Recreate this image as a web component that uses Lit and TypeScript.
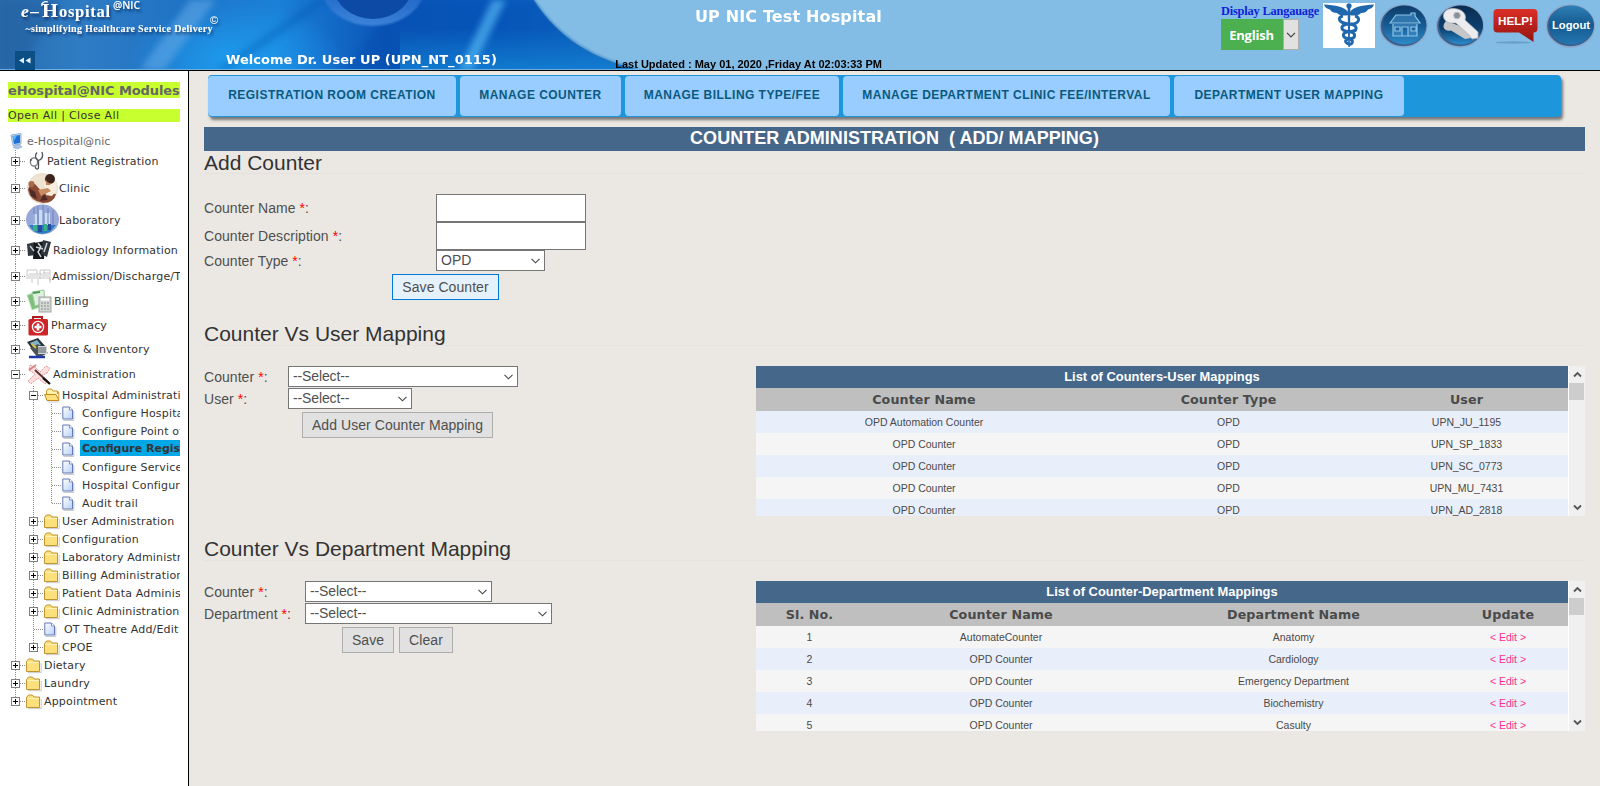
import { LitElement, html, css, svg, nothing } from "lit";
import { customElement, property } from "lit/decorators.js";
import { classMap } from "lit/directives/class-map.js";

const SANS = css`"Liberation Sans", Arial, sans-serif`;
const WIDE = css`"DejaVu Sans", Verdana, sans-serif`;

/* ---------- header ---------- */

@customElement("hospital-header")
class HospitalHeader extends LitElement {
  static styles = css`
    :host {
      display: grid;
      grid-template-columns: 226px 389px 267px 339px 1fr;
      height: 70px;
      border-bottom: 1px solid #000;
      position: relative;
      background: #83bde6;
      overflow: hidden;
    }
    .art { position: absolute; inset: 0; width: 660px; height: 70px; }
    .brand, .welcome, .title, .actions { position: relative; }
    .brand svg { display: block; }
    .welcome {
      display: flex; align-items: flex-end; padding-bottom: 3px;
      font: bold 13px/15px ${WIDE}; color: #fff; white-space: nowrap; letter-spacing: 0.03px;
    }
    .title {
      display: flex; flex-direction: column; justify-content: space-between;
      align-items: flex-end; padding-top: 7px; white-space: nowrap;
    }
    .name { font: bold 16px/20px ${WIDE}; letter-spacing: 0.15px; color: #fff; }
    .updated { font: bold 11px/12px ${SANS}; color: #000; }
    .actions { grid-column: 5; display: flex; padding-top: 3px; }
    .lang { width: 102px; }
    .lang-label { font: bold 12.4px/16px "Liberation Serif", serif; letter-spacing: -0.2px; color: #1022d8; white-space: nowrap; }
    .picker { display: flex; width: 78px; height: 31px; }
    .green {
      width: 61px; padding-right: 1px; background: #4caf50; color: #fff; text-align: center;
      font: bold 13px/32px "Open Sans", "Noto Sans", sans-serif; letter-spacing: -0.2px;
    }
    .drop { box-sizing: border-box; width: 16px; background: #e1e1e1; border: 1px solid #adadad; display: grid; place-items: center; }
  `;

  render() {
    return html`
      <svg class="art" viewBox="0 0 660 70" preserveAspectRatio="none">
        <defs>
          <linearGradient id="sky" x1="0" y1="0" x2="1" y2="0">
            <stop offset="0" stop-color="#2a6cae" /><stop offset=".12" stop-color="#2f7cc4" />
            <stop offset=".26" stop-color="#2173c4" /><stop offset=".42" stop-color="#1a80d8" />
            <stop offset=".58" stop-color="#0c56b8" /><stop offset=".75" stop-color="#0a5cc0" />
            <stop offset="1" stop-color="#1673c8" />
          </linearGradient>
          <radialGradient id="glow"><stop offset="0" stop-color="#1d9df0" /><stop offset="1" stop-color="#1d9df0" stop-opacity="0" /></radialGradient>
          <linearGradient id="blob" x1="0" y1="0" x2="0" y2="1">
            <stop offset="0" stop-color="#1151b0" /><stop offset=".5" stop-color="#1e62c4" /><stop offset="1" stop-color="#4e92e4" />
          </linearGradient>
          <linearGradient id="base" x1="0" y1="0" x2="0" y2="1">
            <stop offset=".4" stop-color="#1483d4" stop-opacity="0" /><stop offset="1" stop-color="#1483d4" stop-opacity=".8" />
          </linearGradient>
          <filter id="soft"><feGaussianBlur stdDeviation="3" /></filter>
          <filter id="soft1"><feGaussianBlur stdDeviation=".8" /></filter>
        </defs>
        <rect width="660" height="70" fill="url(#sky)" />
        <ellipse cx="235" cy="62" rx="110" ry="60" fill="url(#glow)" />
        <path d="M395 0H560L620 70H345Z" fill="#0649ac" opacity=".35" filter="url(#soft)" />
        <rect x="400" width="260" height="70" fill="url(#base)" />
        <g filter="url(#soft)">
          <path d="M190 0H216L164 70H140Z" fill="#6cb0ea" opacity=".5" />
          <path d="M492 0H506L472 70H459Z" fill="#52b4f2" opacity=".7" />
          <path d="M315 0H330L230 70H215Z" fill="#0f52ae" opacity=".35" />
          <path d="M60 0L20 70H0V0Z" fill="#1f5c9c" opacity=".5" />
        </g>
        <ellipse cx="373" cy="-14" rx="52" ry="40" fill="url(#blob)" opacity=".75" filter="url(#soft1)" />
        <ellipse cx="373" cy="-16" rx="40" ry="35" fill="#0c4aa6" />
        <path d="M534 0C552 28 582 57 640 70H660V0Z" fill="#83bde6" />
        <path d="M534 0C552 28 582 57 640 70" fill="none" stroke="#2a75b8" stroke-width="1.6" opacity=".8" filter="url(#soft1)" />
        <rect y="69" width="660" height="1" fill="#6bb0e2" />
      </svg>

      <div class="brand">
        <svg width="226" height="70" viewBox="0 0 226 70">
          <defs><filter id="sh" x="-10%" y="-30%" width="120%" height="180%"><feDropShadow dx="1.5" dy="2.5" stdDeviation="1.2" flood-color="#0a2c5c" flood-opacity=".75" /></filter></defs>
          <g fill="#fff" filter="url(#sh)">
            <text x="21" y="17" font-family="Liberation Serif" font-style="italic" font-weight="bold" font-size="17.5" textLength="18">e–</text>
            <text x="42" y="16.500" font-family="Liberation Serif" font-weight="bold" font-size="19" textLength="16" lengthAdjust="spacingAndGlyphs">H</text>
            <text x="59" y="16.500" font-family="Liberation Serif" font-weight="bold" font-size="16.500" textLength="51">ospital</text>
            <text x="113" y="9" font-family="Open Sans" font-weight="600" font-size="10.5" textLength="27" lengthAdjust="spacingAndGlyphs">@NIC</text>
            <text x="25.500" y="32" font-family="Liberation Serif" font-weight="bold" font-size="10" textLength="187">~simplifying Healthcare Service Delivery</text>
            <text x="210" y="24" font-family="Liberation Sans" font-size="11">©</text>
            <path d="M42 6C41 2.500 45 1 48 2" fill="none" stroke="#fff" stroke-width="1.300" />
          </g>
          <rect x="15" y="51" width="20" height="19" fill="#0c4f84" />
          <path d="M24 57.500V63.500L19 60.500ZM30.500 57.500V63.500L25.500 60.500Z" fill="#dff0f8" />
        </svg>
      </div>
      <div class="welcome">Welcome Dr. User UP (UPN_NT_0115)</div>
      <div class="title">
        <div class="name">UP NIC Test Hospital</div>
        <div class="updated">Last Updated : May 01, 2020 ,Friday At 02:03:33 PM</div>
      </div>
      <div class="actions">
        <div class="lang">
          <div class="lang-label">Display Langauage</div>
          <div class="picker">
            <div class="green">English</div>
            <div class="drop"><svg width="10" height="6" viewBox="0 0 10 6"><path d="M1 .8L5 4.800L9 .8" fill="none" stroke="#444" stroke-width="1.200" /></svg></div>
          </div>
        </div>
        <svg width="277" height="50" viewBox="0 0 277 50">
          <defs>
            <linearGradient id="btn" x1="0" y1="0" x2="0" y2="1"><stop offset="0" stop-color="#0f3c68" /><stop offset=".5" stop-color="#155a94" /><stop offset="1" stop-color="#2f8cc8" /></linearGradient>
            <linearGradient id="key" x1="0" y1="0" x2="0" y2="1"><stop offset="0" stop-color="#0b2c50" /><stop offset=".6" stop-color="#0d4070" /><stop offset="1" stop-color="#2a8ccc" /></linearGradient>
            <linearGradient id="log" x1="0" y1="0" x2="0" y2="1"><stop offset="0" stop-color="#2e7fb6" /><stop offset=".5" stop-color="#155a90" /><stop offset="1" stop-color="#2576b0" /></linearGradient>
            <linearGradient id="red" x1="0" y1="0" x2="0" y2="1"><stop offset="0" stop-color="#dc2f28" /><stop offset="1" stop-color="#941410" /></linearGradient>
          </defs>
          <rect width="52" height="45" fill="#fff" />
          <g fill="#2068ae">
            <circle cx="26" cy="2.800" r="2.600" />
            <path d="M24.600 5H27.400L26.700 44H25.300Z" />
            <path d="M25 9C22 4 12 2 1 1.500C2 5 5 6 7 6.500C8 9 11 10 14 10C16 13 23 13 25 12Z" />
            <path d="M27 9C30 4 40 2 51 1.500C50 5 47 6 45 6.500C44 9 41 10 38 10C36 13 29 13 27 12Z" />
          </g>
          <path d="M20 13C14 14 15 20 26 21S38 14 32 13M26 21C16 22 17 28 26 28.500S36 22 26 21M26 28.500C18 30 19 35 26 35.500S34 30 26 28.500M26 35.500C21 37 22 40 26 41S31 37 26 35.500" fill="none" stroke="#2068ae" stroke-width="3" />
          <g stroke="#8aa8cc" stroke-width="1.400">
            <ellipse cx="80.500" cy="23" rx="23.500" ry="21" fill="#3b608c" /><ellipse cx="137" cy="23" rx="23.500" ry="21" fill="#3b608c" /><ellipse cx="247.500" cy="23" rx="24" ry="21" fill="#3b608c" />
          </g>
          <ellipse cx="81.500" cy="22" rx="22" ry="19.500" fill="url(#btn)" />
          <ellipse cx="138" cy="22" rx="22" ry="19.500" fill="url(#key)" />
          <ellipse cx="248.500" cy="22" rx="22.500" ry="19.500" fill="url(#log)" />
          <path d="M67 20L73 12H88V10H92V13L97 20ZM70 21V33H94V21M79 33V24H85V33M72 24H77V28H72ZM88 24H93V28H88Z" fill="#3d84bc" fill-opacity=".7" stroke="#8cc4e8" stroke-width="1.200" />
          <path d="M123 18C118 23 121 29 128 27.500L142 36L148 35L149 31L140 24Z" fill="#c4c6ca" />
          <path d="M131 5.500C122 5 118 12 122 17C125 21 130 20 133 20L147 33L149 36L155 35V29L142 17C144 11 139 6 131 5.500Z" fill="#ececee" stroke="#aeb2b8" stroke-width=".8" />
          <circle cx="134" cy="12.500" r="3.300" fill="#8a9098" stroke="#b8bcc2" />
          <ellipse cx="190" cy="39.500" rx="18" ry="1.200" fill="#5c8cb0" opacity=".6" />
          <path d="M174.500 6H210.500Q214.500 6 214.500 10V25.500Q214.500 29.500 210.500 29.500V39L196 29.500H174.500Q170.500 29.500 170.500 25.500V10Q170.500 6 174.500 6Z" fill="url(#red)" />
          <text x="175" y="22" font-family="Liberation Sans" font-weight="bold" font-size="11.500" fill="#fff" textLength="35" lengthAdjust="spacingAndGlyphs">HELP!</text>
          <text x="229" y="25.500" font-family="Liberation Sans" font-weight="bold" font-size="11.5" fill="#fff" textLength="38" lengthAdjust="spacingAndGlyphs">Logout</text>
        </svg>
      </div>
    `;
  }
}

/* ---------- sidebar tree ---------- */

type Mark = "+" | "-" | "leaf";
interface Row {
  label: string;
  depth: number;
  mark: Mark;
  icon: string;
  h?: number;
  iw?: number;
  selected?: boolean;
  end?: boolean;
}

const ROWS: Row[] = [
  { label: "Patient Registration", depth: 0, mark: "+", icon: "steth", h: 22, iw: 21 },
  { label: "Clinic", depth: 0, mark: "+", icon: "clinic", h: 32, iw: 33 },
  { label: "Laboratory", depth: 0, mark: "+", icon: "lab", h: 31, iw: 33 },
  { label: "Radiology Information", depth: 0, mark: "+", icon: "radio", h: 29, iw: 27 },
  { label: "Admission/Discharge/Transfer", depth: 0, mark: "+", icon: "bed", h: 24, iw: 26 },
  { label: "Billing", depth: 0, mark: "+", icon: "bill", h: 26, iw: 28 },
  { label: "Pharmacy", depth: 0, mark: "+", icon: "pharm", h: 22, iw: 25 },
  { label: "Store & Inventory", depth: 0, mark: "+", icon: "store", h: 26, iw: 23.5 },
  { label: "Administration", depth: 0, mark: "-", icon: "tools", h: 24, iw: 27 },
  { label: "Hospital Administration", depth: 1, mark: "-", icon: "open" },
  { label: "Configure Hospital", depth: 2, mark: "leaf", icon: "page" },
  { label: "Configure Point of Service", depth: 2, mark: "leaf", icon: "page" },
  { label: "Configure Registration", depth: 2, mark: "leaf", icon: "page", selected: true },
  { label: "Configure Services", depth: 2, mark: "leaf", icon: "page" },
  { label: "Hospital Configuration", depth: 2, mark: "leaf", icon: "page" },
  { label: "Audit trail", depth: 2, mark: "leaf", icon: "page", end: true },
  { label: "User Administration", depth: 1, mark: "+", icon: "folder" },
  { label: "Configuration", depth: 1, mark: "+", icon: "folder" },
  { label: "Laboratory Administration", depth: 1, mark: "+", icon: "folder" },
  { label: "Billing Administration", depth: 1, mark: "+", icon: "folder" },
  { label: "Patient Data Administration", depth: 1, mark: "+", icon: "folder" },
  { label: "Clinic Administration", depth: 1, mark: "+", icon: "folder" },
  { label: "OT Theatre Add/Edit", depth: 1, mark: "leaf", icon: "page" },
  { label: "CPOE", depth: 1, mark: "+", icon: "folder", end: true },
  { label: "Dietary", depth: 0, mark: "+", icon: "folder" },
  { label: "Laundry", depth: 0, mark: "+", icon: "folder" },
  { label: "Appointment", depth: 0, mark: "+", icon: "folder", end: true },
];

const ICONS: Record<string, [number, number, unknown]> = {
  steth: [21, 20, svg`<ellipse cx="8" cy="11" rx="3.600" ry="4.200" fill="none" stroke="#70787c" stroke-width="1.300"/><path d="M9 15.500C10 19 12.500 19 12.500 16V9.500M12.500 9.500C8.500 7 9 3.500 11 1.500M12.500 9.500C17 8 17 4 16 1" fill="none" stroke="#4c5458" stroke-width="1.300"/><circle cx="4.800" cy="9" r="1" fill="#4c5458"/>`],
  clinic: [32, 33, svg`<circle cx="16.500" cy="16.500" r="15" fill="#f0e2d0"/><circle cx="16.500" cy="16.500" r="15" fill="none" stroke="#e4dccb"/><path d="M2 18Q3 11 9 12L17 21L30 22Q28 31 17 31Q4 29 2 18Z" fill="#8c4a34"/><path d="M18 12L30 9L31 18L26 24L20 23Z" fill="#f8eedc"/><circle cx="24" cy="7" r="5" fill="#3c241c"/><path d="M20 8Q22 12 25 11L24 13L20 13Z" fill="#c08058"/><path d="M12 18L22 16L25 19L15 24Z" fill="#c88c60"/><path d="M3 16L9 20L11 27L5 24ZM18 22L22 28L14 29Z" fill="#4c2a28"/><circle cx="5.500" cy="12" r="3" fill="#a86c4c"/>`],
  lab: [33, 31, svg`<ellipse cx="16.500" cy="15.500" rx="16.500" ry="15" fill="#98a8d8"/><path d="M7 10H11V26H7ZM13 6H17V27H13ZM19 9H24V26H19Z" fill="#c8dcf4"/><path d="M8 3V20M12 2V20M17 1V22M22 4V20M27 6V22" stroke="#6c84bc" fill="none"/><path d="M3 21H30L24 28Q12 33 5 24Z" fill="#2c7cc0"/><path d="M7 21H11V27H7ZM18 20H21V27H18Z" fill="#38b08c"/><path d="M12 21H16V28H12ZM22 20H25V26H22Z" fill="#284c9c"/>`],
  radio: [26, 26, svg`<path d="M1 7L9 5L10 18L2 19Z" fill="#30363c"/><path d="M8 6L19 4L18 22L7 22Z" fill="#15181c"/><path d="M17 3L25 5L21 20L15 17Z" fill="#30363c"/><path d="M12 6L15 10L12 15L15 20M4 9L8 14M21 6L18 15M10 10L17 12" stroke="#c8d0d8" stroke-width="1.500" fill="none"/>`],
  bed: [25, 22, svg`<path d="M1 5H11V12M1 5V14M3 9H16M2 13H24V18M14 5V14M14 5H24V16M17 8H24M6 14V18M12 14V20M18 5V12" fill="none" stroke="#bcbcbc" stroke-width=".8"/><path d="M2 9H14V12H2ZM15 9H23V12H15Z" fill="#e4e4e4"/>`],
  bill: [27, 25, svg`<path d="M1 6L14 2L17 17L6 21Z" fill="#7cc07c" stroke="#c8e4c8"/><path d="M6 3L18 1L19 14L9 17Z" fill="#e0f0e0" stroke="#98c898"/><path d="M7 4L14 3" stroke="#48a050" stroke-width="2"/><rect x="13" y="8" width="12" height="15" fill="#d4d8d4" stroke="#a0a4a0"/><path d="M15 10.500H23" stroke="#fff" stroke-width="2"/><path d="M15 14H23M15 17H23M15 20H23" stroke="#8c908c" stroke-dasharray="2 1"/>`],
  pharm: [23, 21, svg`<path d="M7 5V2H16V5" fill="none" stroke="#b01c20" stroke-width="2"/><rect x="2.500" y="4" width="19.500" height="16.500" rx="1.500" fill="#cc2428"/><circle cx="12" cy="12" r="5.600" fill="none" stroke="#fff" stroke-width="1.300"/><path d="M12 8.500V15.500M8.500 12H15.500" stroke="#fff" stroke-width="2.600"/>`],
  store: [23, 24, svg`<path d="M1 5L12 1L20 10L8 15Z" fill="#2c3438"/><path d="M4 6L11 3L15 8L8 11Z" fill="#7cb4d0"/><path d="M4 11L12 7L22 16L12 21Z" fill="#4c5458"/><path d="M12 9H21V17H12Z" fill="#d4d8d8"/><path d="M13 10V16M15 10V16M17 10V16M19 10V16" stroke="#545c60"/><path d="M6 7L10 11" stroke="#d8c048" stroke-width="2"/><path d="M3 20H19" stroke="#2038a8" stroke-width="2.500"/>`],
  tools: [26, 24, svg`<path d="M4 3L9 5L14 10L20 4L24 6L21 11L16 13L22 19L19 22L12 16L5 22L2 19L9 12L3 8Z" fill="#fce0e0" stroke="#e49898" stroke-dasharray="2 1"/><path d="M9 8L23 21" stroke="#583038" stroke-width="1.800"/><path d="M3 8L10 3" stroke="#d87c7c" stroke-width="1.600"/><path d="M17 16L24 22" stroke="#101010" stroke-width="2.200"/>`],
  folder: [18, 18, svg`<path d="M.5 15.500V5.500L2.500 3H6.500L8 5H13.500V15.500Z" fill="#fbe07c" stroke="#c09430"/><path d="M1 6.500H13" stroke="#fff4c0"/><path d="M2 16.700H15.200V7" fill="none" stroke="#c8c8c8"/>`],
  open: [18, 18, svg`<path d="M2.500 14V5L4 3H7.500L9 5H13.500V8" fill="#fdf0a8" stroke="#c89428"/><path d="M.5 8.500H12L15 14.500H3Z" fill="#fbe07c" stroke="#c08c20"/><path d="M13.500 6H14.800V14" fill="none" stroke="#c89428"/><path d="M4 16H15.500" stroke="#ccc"/>`],
  page: [18, 18, svg`<defs><linearGradient id="pg" x1="0" y1="0" x2="1" y2="1"><stop offset="0" stop-color="#fff"/><stop offset="1" stop-color="#b4d0f8"/></linearGradient></defs><path d="M.8 3H7.500L10.500 6V15H.8Z" fill="url(#pg)" stroke="#6478b4"/><path d="M7.500 3V6H10.500" fill="#fff" stroke="#6478b4" stroke-width=".8"/><path d="M1.500 16.300H11.800V7" fill="none" stroke="#c0c0c0"/>`],
};

@customElement("module-tree")
class ModuleTree extends LitElement {
  static styles = css`
    :host {
      display: block; box-sizing: border-box; width: 188px; padding: 11px 8px 0;
      background: #fff; font: 11px/13px ${WIDE}; color: #333; letter-spacing: 0.17px;
    }
    .heading, .links { background: #c8ff2e; white-space: nowrap; overflow: hidden; }
    .heading { font: bold 13px/17px ${WIDE}; height: 16px; color: #666; letter-spacing: -0.1px; }
    .links { margin: 11px 0 10px; letter-spacing: 0.35px; line-height: 14px; height: 13px; }
    .root { display: flex; align-items: center; height: 18px; color: #666; letter-spacing: 0.05px; }
    .root svg { margin-right: 1px; }
    .row { display: flex; height: 18px; overflow: hidden; white-space: nowrap; }
    .cell { flex: none; width: 18px; position: relative; }
    .line::before, .stop::before {
      content: ""; position: absolute; left: 7px; top: 0; width: 1px; height: 100%;
      background: repeating-linear-gradient(#8c8c8c 0 1px, #fff 1px 2px);
    }
    .stop::before { height: 50%; }
    .branch::after {
      content: ""; position: absolute; left: 8px; right: 0; top: 50%; height: 1px;
      background: repeating-linear-gradient(90deg, #8c8c8c 0 1px, #fff 1px 2px);
    }
    .box {
      position: absolute; z-index: 1; left: 3px; top: calc(50% - 4px); width: 9px; height: 9px;
      display: block; background: #fff;
    }
    .icon { flex: none; display: flex; align-items: center; }
    .icon svg { flex: none; }
    .label { align-self: center; padding-top: 1px; }
    .leaf { padding-left: 2px; }
    .selected {
      background: #00a8e8; font-weight: bold; align-self: stretch; line-height: 18px;
      margin-bottom: 2px; flex: 1; padding-top: 0; letter-spacing: 0;
    }
  `;

  private row(r: Row) {
    const cells = [];
    if (r.depth > 0) cells.push(html`<span class="cell line"></span>`);
    if (r.depth > 1) cells.push(html`<span class="cell line"></span>`);
    const [w, h, art] = ICONS[r.icon];
    return html`<div class="row" style="height:${r.h ?? 18}px">
      ${cells}
      <span class=${classMap({ cell: true, branch: true, line: !r.end, stop: !!r.end })}>
        ${r.mark === "leaf" ? nothing : html`<svg class="box" viewBox="0 0 9 9">
          <rect x=".5" y=".5" width="8" height="8" fill="#fff" stroke="#808080" />
          <path d=${r.mark === "+" ? "M2 4.500H7M4.500 2V7" : "M2 4.500H7"} stroke="#000" />
        </svg>`}
      </span>
      <span class="icon" style="width:${r.iw ?? 18}px"><svg width=${w} height=${h} viewBox="0 0 ${w} ${h}">${art}</svg></span>
      <span class=${classMap({ label: true, leaf: r.mark === "leaf", selected: !!r.selected })}>${r.label}</span>
    </div>`;
  }

  render() {
    return html`
      <div class="heading">eHospital@NIC Modules</div>
      <div class="links">Open All | Close All</div>
      <div class="root">
        <svg width="18" height="18" viewBox="0 0 18 18">
          <path d="M3 3L13 1.500V12L5 13.500Z" fill="#c8dcf0" stroke="#98b0cc" />
          <path d="M4.500 4L12 3V11L6 12Z" fill="#1c70d8" /><path d="M4.500 4L9 3.500L6 9Z" fill="#58b4f8" />
          <path d="M7 13L11 12.500L14 15L9 17L5 15.500Z" fill="#a8c4e4" stroke="#88a4c8" stroke-width=".6" />
        </svg>
        <span>e-Hospital@nic</span>
      </div>
      ${ROWS.map((r) => this.row(r))}
    `;
  }
}

/* ---------- scrollable list ---------- */

@customElement("mapping-list")
class MappingList extends LitElement {
  @property() caption = "";
  @property({ attribute: false }) columns: string[] = [];
  @property({ attribute: false }) widths: number[] = [];
  @property({ attribute: false }) rows: string[][] = [];
  @property({ type: Boolean, reflect: true }) flip = false;

  static styles = css`
    :host { display: flex; width: 829px; height: 150px; overflow: hidden; color: #4a4a4a; }
    .grid { width: 812px; text-align: center; white-space: nowrap; }
    .caption { background: #45678a; color: #fff; font: bold 12.9px/21px ${SANS}; height: 22px; }
    .head, .row { display: grid; }
    .head { background: #bfbfbf; font: bold 12.700px/23px ${WIDE}; height: 23px; letter-spacing: 0.1px; }
    .row { font: 10.500px/23px ${SANS}; height: 22px; background: #e8effa; }
    .row:nth-child(even) { background: #f5f5f5; }
    :host([flip]) .row { background: #f5f5f5; }
    :host([flip]) .row:nth-child(even) { background: #e8effa; }
    .edit { color: #ff2f92; }
    .bar {
      flex: 1; margin-left: 1px; background: #f0f0f0; display: flex; flex-direction: column; align-items: center;
      box-shadow: -1px 0 #fff;
    }
    .arrow { height: 17px; display: grid; place-items: center; }
    .thumb { width: 15px; height: 17px; background: #cdcdcd; align-self: flex-start; }
    .gap { flex: 1; }
  `;

  render() {
    const cols = `grid-template-columns:${this.widths.map((w) => w + "px").join(" ")}`;
    const arrow = (d: string) => html`<div class="arrow"><svg width="9" height="7" viewBox="0 0 9 7"><path d=${d} fill="none" stroke="#555" stroke-width="1.800" /></svg></div>`;
    return html`
      <div class="grid">
        <div class="caption">${this.caption}</div>
        <div class="head" style=${cols}>${this.columns.map((c) => html`<span>${c}</span>`)}</div>
        <div>
          ${this.rows.map((r) => html`<div class="row" style=${cols}>
            ${r.map((c) => html`<span class=${c.startsWith("<") ? "edit" : ""}>${c}</span>`)}
          </div>`)}
        </div>
      </div>
      <div class="bar">
        ${arrow("M1 5.500L4.500 2L8 5.500")}
        <div class="thumb"></div><div class="gap"></div>
        ${arrow("M1 1.500L4.500 5L8 1.500")}
      </div>
    `;
  }
}

/* ---------- page ---------- */

@customElement("app-root")
class AppRoot extends LitElement {
  static styles = css`
    :host { display: flex; flex-direction: column; width: 1600px; height: 786px; overflow: hidden; background: #ebe8e3; }
    hospital-header { flex: none; }
    .body { display: flex; flex: 1; min-height: 0; }
    .divider { width: 1px; background: #000; }
    .main { flex: 1; padding: 4px 15px 0; font: 14px/16px ${SANS}; color: #4f4f4f; }
    .menu {
      display: flex; gap: 4px; width: 1353px; height: 42px; margin-left: 4px; box-sizing: border-box; padding: 1px 0;
      background: #1e96dc; border-radius: 4px; box-shadow: 2px 3px 3px #777;
    }
    .item {
      background: #99ccff; border-radius: 4px; color: #0a5a7c; text-align: center; white-space: nowrap;
      font: bold 12px/39px ${SANS}; letter-spacing: 0.46px;
    }
    .title { margin-top: 10px; height: 24px; background: #45678a; color: #fff; text-align: center; font: bold 18px/22px ${SANS}; white-space: pre; letter-spacing: 0.04px; }
    h2 { margin: 0; height: 22px; font: 21px/24px ${SANS}; color: #333; border-bottom: 1px solid #e4e2e1; white-space: nowrap; }
    .form { display: grid; justify-content: start; justify-items: start; }
    .label { white-space: nowrap; letter-spacing: 0.05px; }
    .label i { color: #f00; font-style: normal; }
    .box { box-sizing: border-box; background: #fff; border: 1px solid #767676; }
    .select { display: flex; align-items: center; justify-content: space-between; height: 21px; padding: 0 3px 0 4px; line-height: 17px; }
    .dashes { letter-spacing: -0.12px; }
    .btn { box-sizing: border-box; height: 26px; border: 1px solid #adadad; background: #e1e1e1; text-align: center; line-height: 25px; white-space: nowrap; letter-spacing: 0.06px; }
    .primary { background: #e5f1fb; border-color: #0078d7; }
    .add { margin-top: 20px; grid-template-columns: 232px auto; grid-template-rows: 28px 28px 21px; align-items: center; }
    .save { width: 107px; margin: 3px 0 0 188px; }
    .w150 { width: 150px; height: 28px; } .w109 { width: 109px; } .w230 { width: 230px; } .w124 { width: 124px; } .w187 { width: 187px; } .w247 { width: 247px; }
    .split { display: flex; justify-content: space-between; margin-top: 20px; height: 150px; }
    .map { grid-template-rows: 21px 21px; row-gap: 1px; align-items: center; }
    .user { grid-template-columns: 84px auto; }
    .dept { grid-template-columns: 101px auto; }
    .second { margin-top: 23px; line-height: 22px; }
    .third { margin-top: 22px; line-height: 22px; }
    .btns { display: flex; gap: 5px; margin-top: 3px; }
    .user-btns { margin-left: 98px; } .dept-btns { margin-left: 138px; }
    .w191 { width: 191px; } .w52 { width: 52px; } .w54 { width: 54px; }
  `;

  private menu: [string, number][] = [
    ["REGISTRATION ROOM CREATION", 248],
    ["MANAGE COUNTER", 161],
    ["MANAGE BILLING TYPE/FEE", 214],
    ["MANAGE DEPARTMENT CLINIC FEE/INTERVAL", 327],
    ["DEPARTMENT USER MAPPING", 230],
  ];

  private label(t: string) {
    return html`<span class="label">${t} <i>*</i>:</span>`;
  }

  private select(t: string, cls: string) {
    return html`<div class="box select ${cls}"><span class=${t.startsWith("-") ? "dashes" : ""}>${t}</span><svg width="11" height="6" viewBox="0 0 11 6"><path d="M1.500 .8L5.500 4.800L9.500 .8" fill="none" stroke="#444" stroke-width="1.100" /></svg></div>`;
  }

  render() {
    return html`
      <hospital-header></hospital-header>
      <div class="body">
        <module-tree></module-tree>
        <div class="divider"></div>
        <div class="main">
          <div class="menu">${this.menu.map(([t, w]) => html`<div class="item" style="width:${w}px">${t}</div>`)}</div>
          <div class="title">COUNTER ADMINISTRATION  ( ADD/ MAPPING)</div>
          <h2>Add Counter</h2>
          <div class="form add">
            ${this.label("Counter Name")}<div class="box w150"></div>
            ${this.label("Counter Description")}<div class="box w150"></div>
            ${this.label("Counter Type")}${this.select("OPD", "w109")}
          </div>
          <div class="btn primary save">Save Counter</div>

          <h2 class="second">Counter Vs User Mapping</h2>
          <div class="split">
            <div>
              <div class="form map user">
                ${this.label("Counter")}${this.select("--Select--", "w230")}
                ${this.label("User")}${this.select("--Select--", "w124")}
              </div>
              <div class="btns user-btns"><div class="btn w191">Add User Counter Mapping</div></div>
            </div>
            <mapping-list
              caption="List of Counters-User Mappings"
              .columns=${["Counter Name", "Counter Type", "User"]}
              .widths=${[336, 273, 203]}
              .rows=${[
                ["OPD Automation Counter", "OPD", "UPN_JU_1195"],
                ["OPD Counter", "OPD", "UPN_SP_1833"],
                ["OPD Counter", "OPD", "UPN_SC_0773"],
                ["OPD Counter", "OPD", "UPN_MU_7431"],
                ["OPD Counter", "OPD", "UPN_AD_2818"],
              ]}
            ></mapping-list>
          </div>

          <h2 class="third">Counter Vs Department Mapping</h2>
          <div class="split">
            <div>
              <div class="form map dept">
                ${this.label("Counter")}${this.select("--Select--", "w187")}
                ${this.label("Department")}${this.select("--Select--", "w247")}
              </div>
              <div class="btns dept-btns"><div class="btn w52">Save</div><div class="btn w54">Clear</div></div>
            </div>
            <mapping-list
              flip
              caption="List of Counter-Department Mappings"
              .columns=${["Sl. No.", "Counter Name", "Department Name", "Update"]}
              .widths=${[107, 276, 309, 120]}
              .rows=${[
                ["1", "AutomateCounter", "Anatomy", "< Edit >"],
                ["2", "OPD Counter", "Cardiology", "< Edit >"],
                ["3", "OPD Counter", "Emergency Department", "< Edit >"],
                ["4", "OPD Counter", "Biochemistry", "< Edit >"],
                ["5", "OPD Counter", "Casulty", "< Edit >"],
              ]}
            ></mapping-list>
          </div>
        </div>
      </div>
    `;
  }
}
